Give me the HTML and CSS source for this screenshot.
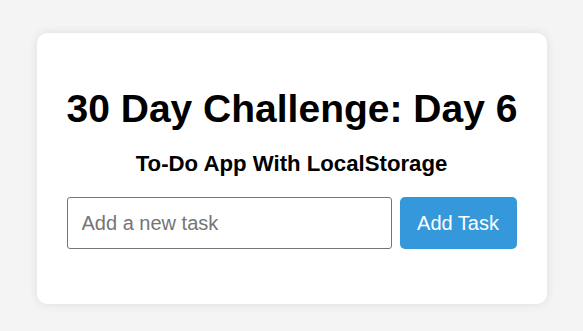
FILE: index.html
```html
<!DOCTYPE html>
<html lang="en">
<head>
<meta charset="UTF-8">
<title>To-Do App</title>
<link rel="stylesheet" href="styles.css">
</head>
<body>
<main class="page">
  <section class="card">
    <h1 class="title">30 Day Challenge: Day 6</h1>
    <h2 class="subtitle">To-Do App With LocalStorage</h2>
    <form class="task-form">
      <input class="task-input" type="text" placeholder="Add a new task">
      <button class="task-button" type="button">Add Task</button>
    </form>
  </section>
</main>
</body>
</html>
```
FILE: styles.css
```css
html, body {
  margin: 0;
  padding: 0;
}
body {
  background: #f4f4f4;
  font-family: "Liberation Sans", Arial, sans-serif;
  height: 331px;
  overflow: hidden;
}
.page {
  display: flex;
  justify-content: center;
  padding-top: 33px;
}
.card {
  background: #fff;
  width: 450px;
  padding: 30px;
  border-radius: 10px;
  box-shadow: 0 0 10px rgba(0, 0, 0, 0.1);
  text-align: center;
}
.title {
  margin: 24px 0 20px;
  font-size: 39px;
  line-height: normal;
  font-weight: bold;
  color: #000;
  white-space: nowrap;
}
.subtitle {
  margin: 0 0 20px;
  font-size: 22.2px;
  line-height: normal;
  font-weight: bold;
  color: #000;
}
.task-form {
  display: flex;
  gap: 8px;
  margin: 0 0 25px;
}
.task-input {
  flex: 1;
  min-width: 0;
  box-sizing: border-box;
  height: 52px;
  padding: 0 14px;
  border: 1px solid #767676;
  border-radius: 3px;
  font-family: "Liberation Sans", Arial, sans-serif;
  font-size: 20px;
  color: #000;
  background: #fff;
}
.task-input::placeholder {
  color: #757575;
}
.task-button {
  box-sizing: border-box;
  width: 117px;
  height: 52px;
  padding: 0;
  border: none;
  border-radius: 5px;
  background: #3498db;
  color: #fff;
  font-family: "Liberation Sans", Arial, sans-serif;
  font-size: 20px;
  cursor: pointer;
}
```
